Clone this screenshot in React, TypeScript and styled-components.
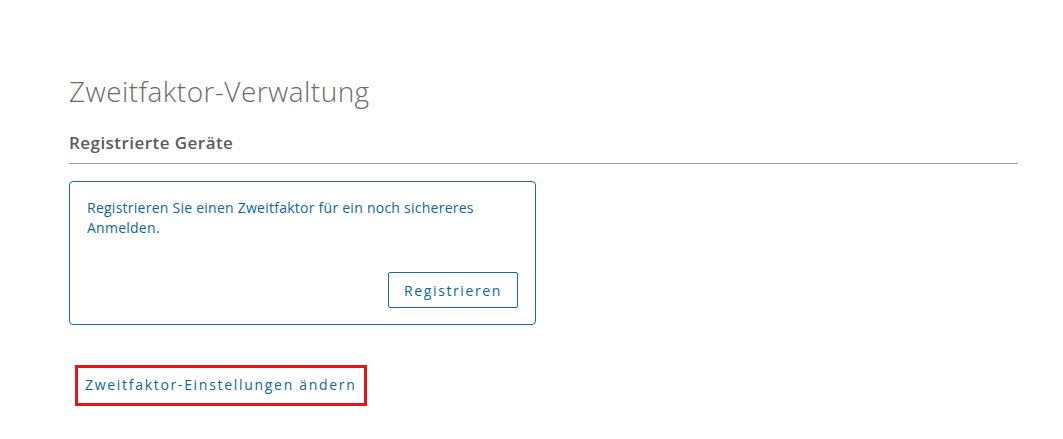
import React from "react";
import styled, { createGlobalStyle } from "styled-components";

const Global = createGlobalStyle`
  html, body { margin: 0; padding: 0; background: #ffffff; }
  body { font-family: "Open Sans", "Noto Sans", Arial, sans-serif; }
`;

const Page = styled.main`
  padding: 74px 45px 0 69px;
`;

const Title = styled.h1`
  margin: 0;
  font-size: 28px;
  line-height: 34px;
  font-weight: 300;
  letter-spacing: 0.45px;
  color: #6b6b6b;
`;

const SectionHeader = styled.div`
  margin-top: 25px;
  padding-bottom: 10px;
  border-bottom: 1px solid #9a9a9a;
`;

const SectionTitle = styled.h2`
  margin: 0;
  font-size: 17px;
  line-height: 20px;
  font-weight: 600;
  letter-spacing: 0.45px;
  color: #5c5c5c;
`;

const Card = styled.section`
  margin-top: 17px;
  width: 467px;
  box-sizing: border-box;
  border: 1px solid #1b6a98;
  border-radius: 4px;
  padding: 16px 17px 16px 17px;
  display: flex;
  flex-direction: column;
`;

const CardText = styled.p`
  margin: 0;
  font-size: 14px;
  line-height: 20px;
  letter-spacing: 0.25px;
  color: #0f669a;
`;

const CardActions = styled.div`
  display: flex;
  justify-content: flex-end;
  margin-top: 34px;
`;

const OutlineButton = styled.button`
  width: 130px;
  height: 36px;
  box-sizing: border-box;
  background: #fff;
  border: 1px solid #1b6a98;
  border-radius: 2px;
  color: #0f669a;
  font-family: inherit;
  font-size: 14px;
  letter-spacing: 1.6px;
  cursor: pointer;
`;

const LinkBox = styled.div`
  margin-top: 40px;
  margin-left: 6px;
  width: 292px;
  height: 41px;
  box-sizing: border-box;
  border: 3px solid #e8141c;
  display: flex;
  align-items: center;
  padding: 0 0 3px 7px;
`;

const TextLink = styled.a`
  font-size: 14px;
  letter-spacing: 1.7px;
  color: #0f669a;
  text-decoration: none;
  cursor: pointer;
`;

export default function App() {
  return (
    <>
      <Global />
      <Page>
        <Title>Zweitfaktor-Verwaltung</Title>
        <SectionHeader>
          <SectionTitle>Registrierte Geräte</SectionTitle>
        </SectionHeader>
        <Card>
          <CardText>
            Registrieren Sie einen Zweitfaktor für ein noch sichereres Anmelden.
          </CardText>
          <CardActions>
            <OutlineButton>Registrieren</OutlineButton>
          </CardActions>
        </Card>
        <LinkBox>
          <TextLink>Zweitfaktor-Einstellungen ändern</TextLink>
        </LinkBox>
      </Page>
    </>
  );
}
